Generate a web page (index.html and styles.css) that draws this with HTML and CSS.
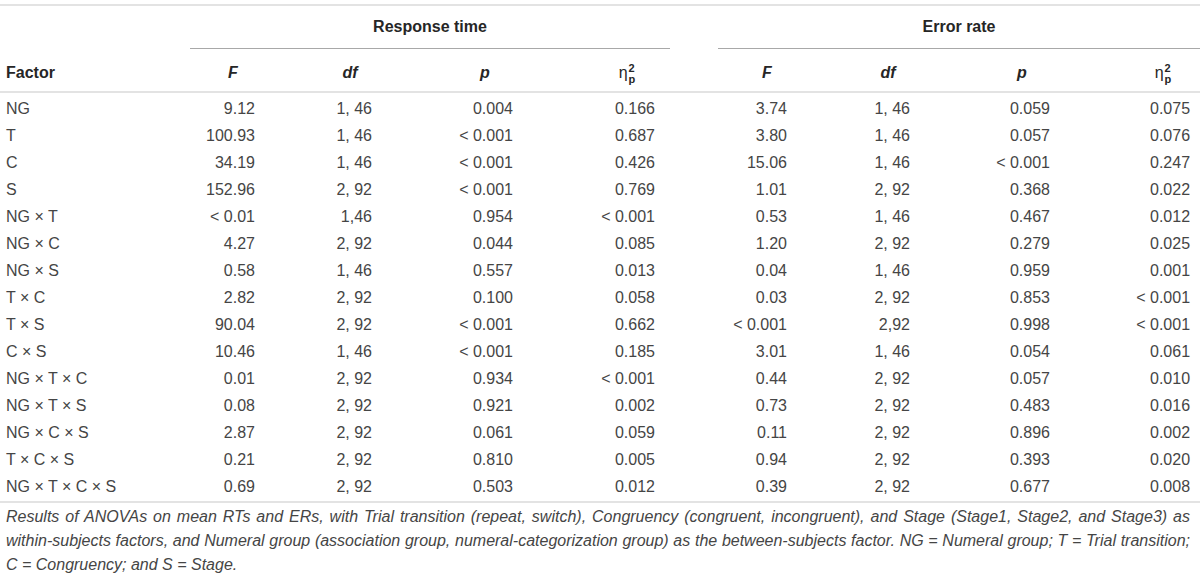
FILE: index.html
```html
<!DOCTYPE html>
<html lang="en">
<head>
<meta charset="utf-8">
<title>ANOVA table</title>
<link rel="stylesheet" href="styles.css">
</head>
<body>
<div class="wrap">
<table class="anova">
  <colgroup>
    <col class="w1"><col class="w2"><col class="w3"><col class="w4"><col class="w5"><col class="w6"><col class="w7"><col class="w8"><col class="w9">
  </colgroup>
  <thead>
    <tr class="group-row">
      <th></th>
      <th colspan="4" class="grp grp-rt"><div class="grp-label">Response time</div></th>
      <th colspan="4" class="grp grp-er"><div class="grp-label">Error rate</div></th>
    </tr>
    <tr class="col-row">
      <th class="factor-h">Factor</th>
      <th><i>F</i></th>
      <th><i>df</i></th>
      <th><i>p</i></th>
      <th class="eta-h"><span class="eta">η<span class="ss"><span class="sup">2</span><span class="sub">p</span></span></span></th>
      <th><i>F</i></th>
      <th><i>df</i></th>
      <th><i>p</i></th>
      <th class="eta-h"><span class="eta">η<span class="ss"><span class="sup">2</span><span class="sub">p</span></span></span></th>
    </tr>
  </thead>
  <tbody>
    <tr><td>NG</td><td>9.12</td><td>1, 46</td><td>0.004</td><td>0.166</td><td>3.74</td><td>1, 46</td><td>0.059</td><td>0.075</td></tr>
    <tr><td>T</td><td>100.93</td><td>1, 46</td><td>&lt; 0.001</td><td>0.687</td><td>3.80</td><td>1, 46</td><td>0.057</td><td>0.076</td></tr>
    <tr><td>C</td><td>34.19</td><td>1, 46</td><td>&lt; 0.001</td><td>0.426</td><td>15.06</td><td>1, 46</td><td>&lt; 0.001</td><td>0.247</td></tr>
    <tr><td>S</td><td>152.96</td><td>2, 92</td><td>&lt; 0.001</td><td>0.769</td><td>1.01</td><td>2, 92</td><td>0.368</td><td>0.022</td></tr>
    <tr><td>NG × T</td><td>&lt; 0.01</td><td>1,46</td><td>0.954</td><td>&lt; 0.001</td><td>0.53</td><td>1, 46</td><td>0.467</td><td>0.012</td></tr>
    <tr><td>NG × C</td><td>4.27</td><td>2, 92</td><td>0.044</td><td>0.085</td><td>1.20</td><td>2, 92</td><td>0.279</td><td>0.025</td></tr>
    <tr><td>NG × S</td><td>0.58</td><td>1, 46</td><td>0.557</td><td>0.013</td><td>0.04</td><td>1, 46</td><td>0.959</td><td>0.001</td></tr>
    <tr><td>T × C</td><td>2.82</td><td>2, 92</td><td>0.100</td><td>0.058</td><td>0.03</td><td>2, 92</td><td>0.853</td><td>&lt; 0.001</td></tr>
    <tr><td>T × S</td><td>90.04</td><td>2, 92</td><td>&lt; 0.001</td><td>0.662</td><td>&lt; 0.001</td><td>2,92</td><td>0.998</td><td>&lt; 0.001</td></tr>
    <tr><td>C × S</td><td>10.46</td><td>1, 46</td><td>&lt; 0.001</td><td>0.185</td><td>3.01</td><td>1, 46</td><td>0.054</td><td>0.061</td></tr>
    <tr><td>NG × T × C</td><td>0.01</td><td>2, 92</td><td>0.934</td><td>&lt; 0.001</td><td>0.44</td><td>2, 92</td><td>0.057</td><td>0.010</td></tr>
    <tr><td>NG × T × S</td><td>0.08</td><td>2, 92</td><td>0.921</td><td>0.002</td><td>0.73</td><td>2, 92</td><td>0.483</td><td>0.016</td></tr>
    <tr><td>NG × C × S</td><td>2.87</td><td>2, 92</td><td>0.061</td><td>0.059</td><td>0.11</td><td>2, 92</td><td>0.896</td><td>0.002</td></tr>
    <tr><td>T × C × S</td><td>0.21</td><td>2, 92</td><td>0.810</td><td>0.005</td><td>0.94</td><td>2, 92</td><td>0.393</td><td>0.020</td></tr>
    <tr><td>NG × T × C × S</td><td>0.69</td><td>2, 92</td><td>0.503</td><td>0.012</td><td>0.39</td><td>2, 92</td><td>0.677</td><td>0.008</td></tr>
  </tbody>
</table>
<p class="caption">Results of ANOVAs on mean RTs and ERs, with Trial transition (repeat, switch), Congruency (congruent, incongruent), and Stage (Stage1, Stage2, and Stage3) as within-subjects factors, and Numeral group (association group, numeral-categorization group) as the between-subjects factor. NG = Numeral group; T = Trial transition; C = Congruency; and S = Stage.</p>
</div>
</body>
</html>
```
FILE: styles.css
```css
html, body {
  margin: 0;
  padding: 0;
  background: #ffffff;
}

body {
  font-family: "Liberation Sans", Arial, Helvetica, sans-serif;
  font-size: 16px;
  color: #454545;
}

.wrap {
  width: 1200px;
  padding-top: 4px;
}

.anova {
  width: 1200px;
  border-collapse: collapse;
  table-layout: fixed;
  border-top: 2px solid #e3e3e3;
}

.w1 { width: 190px; }
.w2 { width: 86px; }
.w3 { width: 148px; }
.w4 { width: 122px; }
.w5 { width: 148px; }
.w6 { width: 146px; }
.w7 { width: 96px; }
.w8 { width: 172px; }
.w9 { width: 92px; }

.anova th {
  font-weight: bold;
  color: #262626;
  line-height: 19px;
  text-align: center;
  padding: 0;
}

.group-row th {
  padding: 0;
}

.grp-label {
  padding: 11px 0 12px;
  border-bottom: 1px solid #a8a8a8;
}

.grp-rt .grp-label { margin-right: 24px; }
.grp-er .grp-label { margin-left: 24px; }

.col-row th {
  padding: 14px 0 9px;
  height: 19px;
  border-bottom: 2px solid #e3e3e3;
  vertical-align: top;
}

.col-row th.factor-h {
  text-align: left;
  padding-left: 6px;
}

.col-row th:nth-child(5) { padding-left: 14px; }
.col-row th:nth-child(9) { padding-left: 18px; }

.eta {
  display: inline-flex;
  align-items: center;
  font-weight: normal;
  line-height: 19px;
  height: 19px;
}

.ss {
  display: inline-flex;
  flex-direction: column;
  align-items: flex-start;
  font-weight: bold;
  font-size: 11px;
  line-height: 11px;
  margin-left: 1px;
  position: relative;
  top: 1px;
}

.ss .sup,
.ss .sub {
  display: block;
  height: 11px;
}

.anova td {
  padding: 4px 0;
  line-height: 19px;
  text-align: right;
  white-space: nowrap;
}

.anova tbody tr:first-child td { padding-top: 6px; }
.anova tbody tr:last-child td {
  padding-bottom: 5px;
  border-bottom: 2px solid #e3e3e3;
}

.anova td:nth-child(1) { text-align: left; padding-left: 6px; }
.anova td:nth-child(2) { padding-right: 21px; }
.anova td:nth-child(3) { padding-right: 52px; }
.anova td:nth-child(4) { padding-right: 33px; }
.anova td:nth-child(5) { padding-right: 39px; }
.anova td:nth-child(6) { padding-right: 53px; }
.anova td:nth-child(7) { padding-right: 26px; }
.anova td:nth-child(8) { padding-right: 58px; }
.anova td:nth-child(9) { padding-right: 10px; }

.caption {
  margin: 0;
  padding: 2px 10px 0 6px;
  font-style: italic;
  line-height: 24px;
  text-align: justify;
  color: #454545;
}
```
